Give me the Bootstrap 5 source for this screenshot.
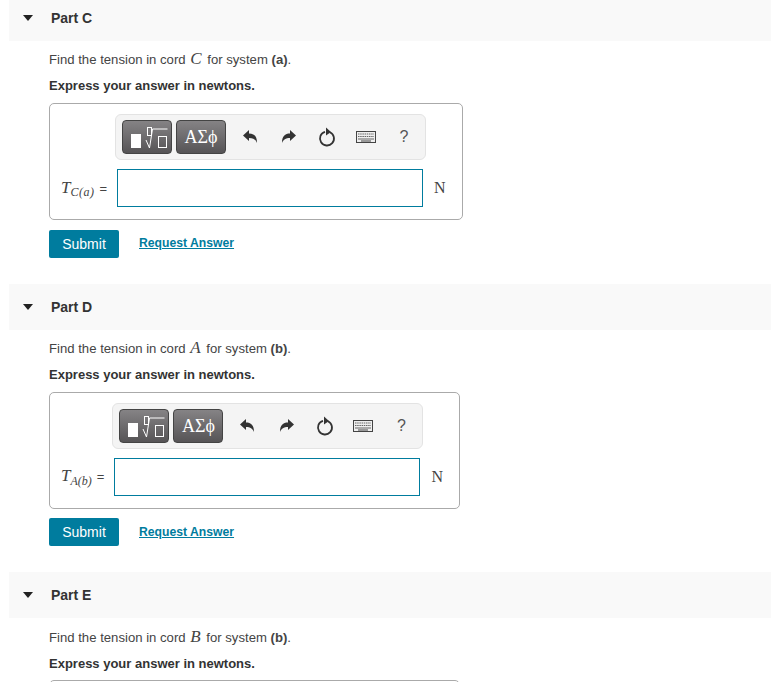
<!DOCTYPE html>
<html lang="en">
<head>
    <meta charset="UTF-8">
    <meta name="viewport" content="width=device-width, initial-scale=1.0">
    <title>Parts</title>
    <link href="https://cdn.jsdelivr.net/npm/bootstrap@5.3.0/dist/css/bootstrap.min.css" rel="stylesheet">
    <style>
        body {
            height: 682px;
            overflow: hidden;
            font-family: "Liberation Sans", Arial, sans-serif;
            font-size: 13px;
            line-height: 20px;
            color: #333;
        }
        .page-wrap { margin-top: -5px; padding-left: 9px; }
        .part-block { height: 288.7px; }
        .part-head {
            height: 46px;
            background: #f9f9f9;
            padding-left: 14px;
            font-size: 14px;
            font-weight: 700;
            color: #333;
        }
        .part-arrow {
            width: 0;
            height: 0;
            border-left: 5.5px solid transparent;
            border-right: 5.5px solid transparent;
            border-top: 6px solid #222;
            margin-right: 18px;
        }
        .part-body { padding: 8px 0 0 40px; }
        .part-block:last-child .part-body { padding-top: 9px; }
        .part-body p { margin: 0 0 6px; }
        .part-body p.q-txt { font-size: 13.15px; color: #444; }
        .math-var { font-family: "Liberation Serif", serif; font-style: italic; font-size: 17px; margin: 0 2px 0 1px; }
        .answer-box {
            display: inline-grid;
            grid-template-columns: auto 306px 22px;
            border: 1px solid #aaa;
            border-radius: 5px;
            padding: 10px 17px 12px 11px;
            margin-top: 1px;
            width: max-content;
        }
        .answer-stub {
            width: 411px;
            height: 117px;
            border: 1px solid #aaa;
            border-radius: 5px;
        }
        .tool-bar {
            grid-column: 2 / 4;
            margin-left: -2px;
            width: 311px;
            height: 46px;
            background: #f4f4f4;
            border: 1px solid #e3e3e3;
            border-radius: 6px;
            padding-left: 6px;
            margin-bottom: 9px;
        }
        .tmpl-btn {
            height: 34px;
            width: 50px;
            margin-right: 4px;
            border: 1px solid #444;
            border-radius: 4px;
            background: linear-gradient(#858385, #565456);
            color: #fff;
            font-family: "Liberation Serif", serif;
            font-size: 18px;
        }
        .tool-icon { width: 38.5px; color: #333; }
        .tmpl-btn + .tool-icon { margin-left: 1px; }
        .tool-help { font-size: 16px; color: #555; width: 38px; text-align: center; }
        .ans-label {
            font-family: "Liberation Serif", serif;
            font-size: 17px;
            color: #444;
            padding-right: 10px;
            white-space: nowrap;
        }
        .ans-label sub { font-family: "Liberation Serif", serif; font-size: 12px; font-style: italic; bottom: -.3em; }
        .ans-label sub.sub-wide { letter-spacing: .5px; }
        .ans-label span { font-family: "Liberation Sans", sans-serif; font-size: 13px; margin-left: 5px; }
        .ans-input.form-control {
            height: 38px;
            border: 1px solid #007c9e;
            border-radius: 0;
        }
        .unit-txt { font-family: "Liberation Serif", serif; font-size: 16px; padding-left: 11px; color: #444; }
        .submit-btn.btn {
            background: #007c9e;
            border: 0;
            border-radius: 2px;
            color: #fff;
            font-size: 14px;
            width: 70px;
            height: 28px;
            padding: 1px 0 0;
        }
        .req-link { font-size: 12.2px; font-weight: 700; color: #007c9e; margin-left: 20px; margin-top: -1px; }
        .submit-row { margin-top: 9.5px; }
    </style>
</head>
<body>
    <div class="page-wrap">

        <div class="part-block">
            <div class="part-head d-flex align-items-center"><span class="part-arrow"></span>Part C</div>
            <div class="part-body">
                <p class="q-txt">Find the tension in cord <span class="math-var">C</span> for system <b>(a)</b>.</p>
                <p><b>Express your answer in newtons.</b></p>
                <div class="answer-box align-items-center">
                    <span></span>
                    <div class="tool-bar d-flex align-items-center">
                        <span class="tmpl-btn d-flex align-items-center justify-content-center">
                            <svg width="48" height="32" viewBox="0 0 48 32"><rect x="8" y="13" width="10" height="14" fill="#fff"/><rect x="24.5" y="6.5" width="4" height="8" fill="none" stroke="#fff"/><path d="M23 19l3.500 8 3-19h15" fill="none" stroke="#fff"/><rect x="35.500" y="15.500" width="8" height="11" fill="none" stroke="#fff"/></svg>
                        </span>
                        <span class="tmpl-btn d-flex align-items-center justify-content-center">ΑΣϕ</span>
                        <span class="tool-icon d-flex justify-content-center">
                            <svg width="15" height="14" viewBox="0 0 15 14"><path d="M0 5.500L6 0v3.500c5 0 8 2.500 8 9.500-1.500-3.500-3.500-5-8-5v3z" fill="#333"/></svg>
                        </span>
                        <span class="tool-icon d-flex justify-content-center">
                            <svg width="15" height="14" viewBox="0 0 15 14"><path d="M15 5.500L9 0v3.500c-5 0-8 2.500-8 9.500 1.500-3.500 3.500-5 8-5v3z" fill="#333"/></svg>
                        </span>
                        <span class="tool-icon d-flex justify-content-center">
                            <svg width="18" height="20" viewBox="0 0 18 20"><path d="M12 5.200A7 7 0 1 1 7 4.800" fill="none" stroke="#333" stroke-width="1.800"/><path d="M8 0.500l5 4.500-5 3.500z" fill="#333"/></svg>
                        </span>
                        <span class="tool-icon d-flex justify-content-center">
                            <svg width="20" height="12" viewBox="0 0 20 12"><rect x=".5" y=".5" width="19" height="11" fill="#eee" stroke="#444"/><path d="M2 3h16M2 5.500h16" stroke="#666" stroke-dasharray="1.500 .7"/><path d="M2 8h16" stroke="#666"/><path d="M5 10h10" stroke="#444"/></svg>
                        </span>
                        <span class="tool-help">?</span>
                    </div>
                    <label class="ans-label"><i>T</i><sub class="sub-wide">C(a)</sub><span>=</span></label>
                    <input class="ans-input form-control" type="text">
                    <span class="unit-txt">N</span>
                </div>
                <div class="submit-row d-flex align-items-center">
                    <button class="submit-btn btn">Submit</button>
                    <a class="req-link" href="#">Request Answer</a>
                </div>
            </div>
        </div>

        <div class="part-block">
            <div class="part-head d-flex align-items-center"><span class="part-arrow"></span>Part D</div>
            <div class="part-body">
                <p class="q-txt">Find the tension in cord <span class="math-var">A</span> for system <b>(b)</b>.</p>
                <p><b>Express your answer in newtons.</b></p>
                <div class="answer-box align-items-center">
                    <span></span>
                    <div class="tool-bar d-flex align-items-center">
                        <span class="tmpl-btn d-flex align-items-center justify-content-center">
                            <svg width="48" height="32" viewBox="0 0 48 32"><rect x="8" y="13" width="10" height="14" fill="#fff"/><rect x="24.5" y="6.5" width="4" height="8" fill="none" stroke="#fff"/><path d="M23 19l3.500 8 3-19h15" fill="none" stroke="#fff"/><rect x="35.500" y="15.500" width="8" height="11" fill="none" stroke="#fff"/></svg>
                        </span>
                        <span class="tmpl-btn d-flex align-items-center justify-content-center">ΑΣϕ</span>
                        <span class="tool-icon d-flex justify-content-center">
                            <svg width="15" height="14" viewBox="0 0 15 14"><path d="M0 5.500L6 0v3.500c5 0 8 2.500 8 9.500-1.500-3.500-3.500-5-8-5v3z" fill="#333"/></svg>
                        </span>
                        <span class="tool-icon d-flex justify-content-center">
                            <svg width="15" height="14" viewBox="0 0 15 14"><path d="M15 5.500L9 0v3.500c-5 0-8 2.500-8 9.500 1.500-3.500 3.500-5 8-5v3z" fill="#333"/></svg>
                        </span>
                        <span class="tool-icon d-flex justify-content-center">
                            <svg width="18" height="20" viewBox="0 0 18 20"><path d="M12 5.200A7 7 0 1 1 7 4.800" fill="none" stroke="#333" stroke-width="1.800"/><path d="M8 0.500l5 4.500-5 3.500z" fill="#333"/></svg>
                        </span>
                        <span class="tool-icon d-flex justify-content-center">
                            <svg width="20" height="12" viewBox="0 0 20 12"><rect x=".5" y=".5" width="19" height="11" fill="#eee" stroke="#444"/><path d="M2 3h16M2 5.500h16" stroke="#666" stroke-dasharray="1.500 .7"/><path d="M2 8h16" stroke="#666"/><path d="M5 10h10" stroke="#444"/></svg>
                        </span>
                        <span class="tool-help">?</span>
                    </div>
                    <label class="ans-label"><i>T</i><sub>A(b)</sub><span>=</span></label>
                    <input class="ans-input form-control" type="text">
                    <span class="unit-txt">N</span>
                </div>
                <div class="submit-row d-flex align-items-center">
                    <button class="submit-btn btn">Submit</button>
                    <a class="req-link" href="#">Request Answer</a>
                </div>
            </div>
        </div>

        <div class="part-block">
            <div class="part-head d-flex align-items-center"><span class="part-arrow"></span>Part E</div>
            <div class="part-body">
                <p class="q-txt">Find the tension in cord <span class="math-var">B</span> for system <b>(b)</b>.</p>
                <p><b>Express your answer in newtons.</b></p>
                <div class="answer-stub"></div>
            </div>
        </div>

    </div>
</body>
</html>
